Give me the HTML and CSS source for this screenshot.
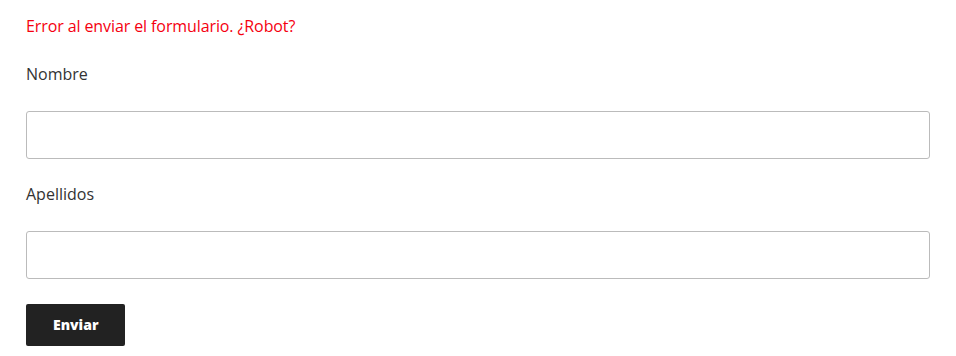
FILE: index.html
```html
<!DOCTYPE html>
<html lang="es">
<head>
  <meta charset="UTF-8">
  <meta name="viewport" content="width=device-width, initial-scale=1.0">
  <title>Formulario</title>
  <link rel="stylesheet" href="styles.css">
</head>
<body>

  <form class="contact-form" onsubmit="return false;">
    <p class="form-error">Error al enviar el formulario. ¿Robot?</p>

    <div class="field">
      <label for="nombre">Nombre</label>
      <input type="text" id="nombre" name="nombre">
    </div>

    <div class="field">
      <label for="apellidos">Apellidos</label>
      <input type="text" id="apellidos" name="apellidos">
    </div>

    <button type="submit" class="submit-btn">Enviar</button>
  </form>

</body>
</html>
```

FILE: styles.css
```css
* {
  margin: 0;
  padding: 0;
  box-sizing: border-box;
}

body {
  background: #fff;
  color: #333;
  font-family: "Open Sans", "Liberation Sans", Arial, sans-serif;
  font-size: 16px;
  line-height: 24px;
}

.contact-form {
  display: flex;
  flex-direction: column;
  align-items: flex-start;
  padding: 14px 26px 0 26px;
}

.form-error {
  color: #f5000f;
  letter-spacing: -0.1px;
  margin-bottom: 24px;
}

.field {
  width: 100%;
  display: flex;
  flex-direction: column;
  margin-bottom: 23px;
}

.field label {
  display: block;
  margin-bottom: 25px;
}

.field input {
  width: 100%;
  height: 48px;
  border: 1px solid #bbb;
  border-radius: 3px;
  background: #fff;
  padding: 7px;
  font-size: 16px;
  color: #333;
  outline: none;
}

.field input:focus {
  border-color: #222;
}

.submit-btn {
  margin-top: 2px;
  background: #222;
  color: #fff;
  border: none;
  border-radius: 2px;
  font-family: "Open Sans", "Liberation Sans", Arial, sans-serif;
  font-size: 14px;
  font-weight: 800;
  line-height: 1;
  padding: 14px 27px;
  cursor: pointer;
}
```
